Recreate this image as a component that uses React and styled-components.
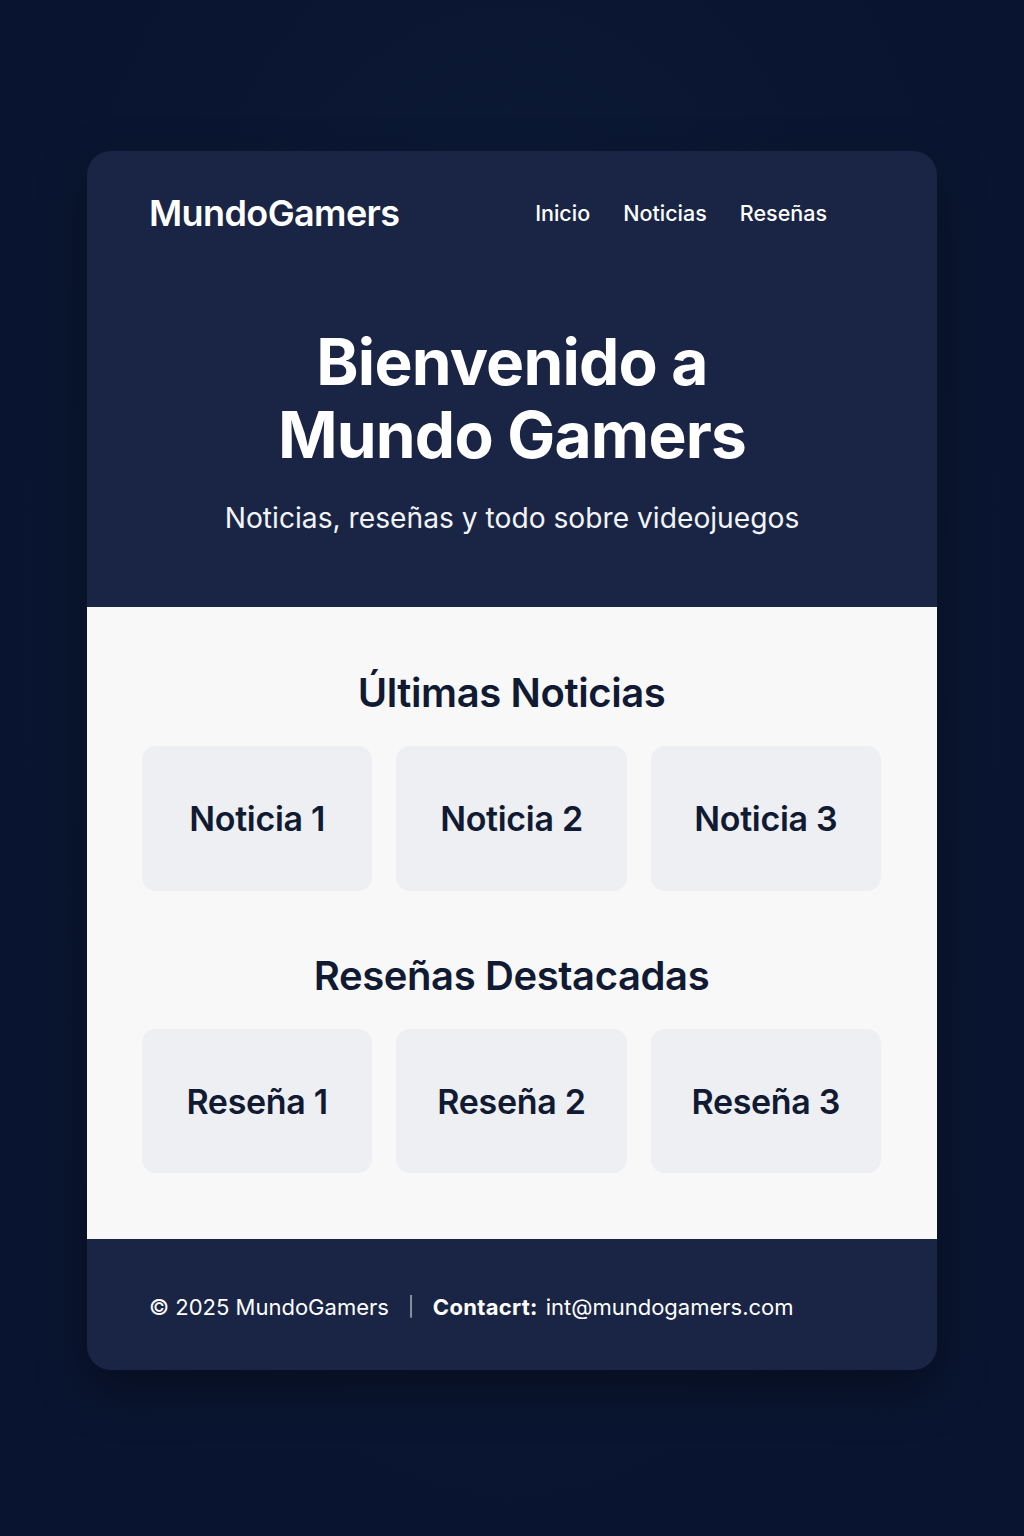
import styled, { createGlobalStyle } from "styled-components";

const GlobalStyle = createGlobalStyle`
  * {
    box-sizing: border-box;
  }
  body {
    margin: 0;
    background: #0a1733;
    font-family: Inter, "Noto Sans", "Liberation Sans", sans-serif;
  }
`;

const Page = styled.div`
  min-height: 1536px;
  padding: 151px 87px 0;
  background: radial-gradient(ellipse at 50% 40%, #0e1b38 0%, #0a1631 60%, #091430 100%);
`;

const Card = styled.div`
  width: 850px;
  border-radius: 24px;
  overflow: hidden;
  background: #1a2545;
  box-shadow: 0 20px 50px rgba(0, 0, 0, 0.35);
`;

const Header = styled.header`
  display: flex;
  align-items: center;
  justify-content: space-between;
  padding: 20px 110px 0 62px;
  height: 104px;
`;

const Logo = styled.div`
  font-size: 36px;
  font-weight: 600;
  color: #ffffff;
  letter-spacing: -0.6px;
`;

const Nav = styled.nav`
  display: flex;
  gap: 33px;
`;

const NavLink = styled.a`
  font-size: 21.5px;
  font-weight: 500;
  color: #ffffff;
  text-decoration: none;
`;

const Hero = styled.section`
  display: flex;
  flex-direction: column;
  align-items: center;
  padding: 70px 0 72px;
  text-align: center;
`;

const HeroTitle = styled.h1`
  margin: 0;
  font-size: 64px;
  line-height: 73px;
  font-weight: 700;
  color: #ffffff;
  letter-spacing: -0.8px;
`;

const HeroSubtitle = styled.p`
  margin: 30px 0 0;
  font-size: 28.2px;
  font-weight: 400;
  color: #f2f4f8;
`;

const Content = styled.main`
  background: #f8f8f9;
  padding: 62px 56px 66px 55px;
`;

const Section = styled.section`
  display: flex;
  flex-direction: column;
  gap: 29px;
  & + & {
    margin-top: 61px;
  }
`;

const SectionTitle = styled.h2`
  margin: 0;
  text-align: center;
  font-size: 40px;
  line-height: 48px;
  font-weight: 600;
  color: #111a33;
  letter-spacing: -0.4px;
`;

const Grid = styled.div`
  display: grid;
  grid-template-columns: repeat(3, 1fr);
  gap: 24px;
`;

const Tile = styled.div`
  height: ${(p) => p.$h}px;
  border-radius: 14px;
  background: #eeeff2;
  display: flex;
  align-items: center;
  justify-content: center;
  font-size: 34px;
  font-weight: 600;
  color: #111a33;
  letter-spacing: -0.3px;
`;

const Footer = styled.footer`
  display: flex;
  align-items: center;
  height: 131px;
  padding: 4px 62px 0;
  font-size: 22px;
  color: #ffffff;
`;

const Divider = styled.span`
  margin: 0 19px;
  font-size: 19px;
  color: #c9cfdc;
  font-weight: 300;
`;

const Label = styled.strong`
  font-weight: 700;
  margin-right: 8px;
  letter-spacing: 0.3px;
`;

const news = ["Noticia 1", "Noticia 2", "Noticia 3"];
const reviews = ["Reseña 1", "Reseña 2", "Reseña 3"];

export default function App() {
  return (
    <>
      <GlobalStyle />
      <Page>
        <Card>
          <Header>
            <Logo>MundoGamers</Logo>
            <Nav>
              <NavLink href="#">Inicio</NavLink>
              <NavLink href="#">Noticias</NavLink>
              <NavLink href="#">Reseñas</NavLink>
            </Nav>
          </Header>

          <Hero>
            <HeroTitle>
              Bienvenido a
              <br />
              Mundo Gamers
            </HeroTitle>
            <HeroSubtitle>Noticias, reseñas y todo sobre videojuegos</HeroSubtitle>
          </Hero>

          <Content>
            <Section>
              <SectionTitle>Últimas Noticias</SectionTitle>
              <Grid>
                {news.map((n) => (
                  <Tile key={n} $h={145}>
                    {n}
                  </Tile>
                ))}
              </Grid>
            </Section>
            <Section>
              <SectionTitle>Reseñas Destacadas</SectionTitle>
              <Grid>
                {reviews.map((r) => (
                  <Tile key={r} $h={144}>
                    {r}
                  </Tile>
                ))}
              </Grid>
            </Section>
          </Content>

          <Footer>
            <span>© 2025 MundoGamers</span>
            <Divider>|</Divider>
            <Label>Contacrt:</Label>
            <span>int@mundogamers.com</span>
          </Footer>
        </Card>
      </Page>
    </>
  );
}
